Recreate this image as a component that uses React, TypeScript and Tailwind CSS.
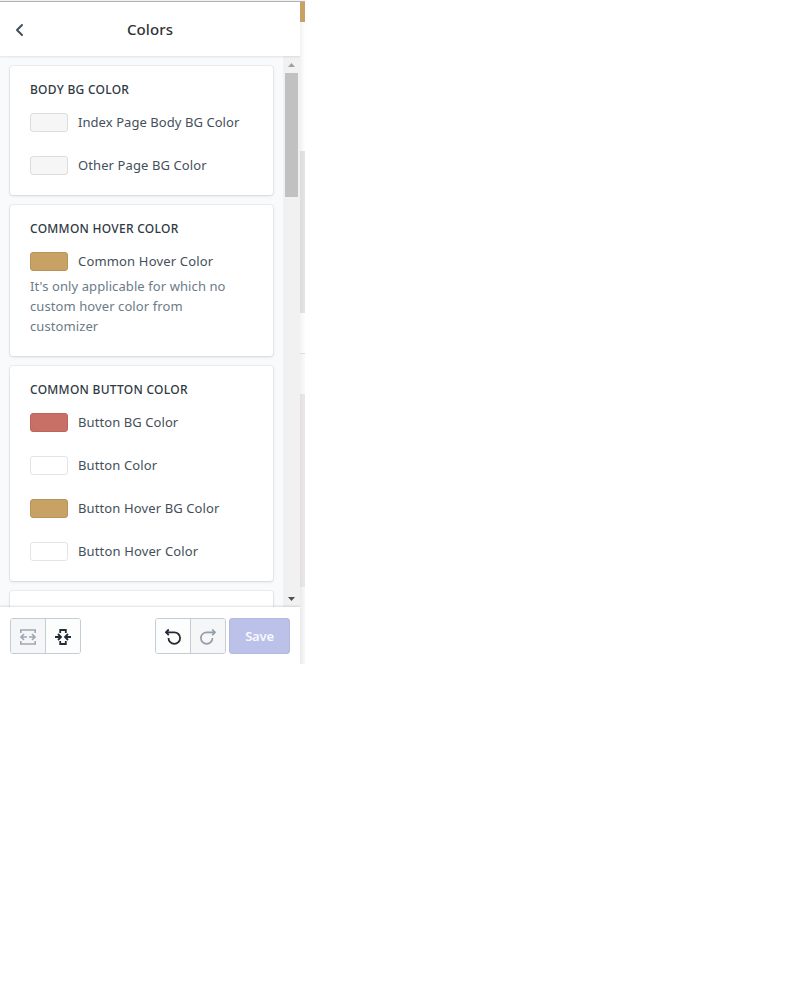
import React from "react";

type Item = { label: string; swatch: string; tracking: string };

function Row({ label, swatch, tracking }: Item) {
  return (
    <div className="flex h-5 items-center gap-[10px]">
      <span className={`mt-px h-[19px] w-[38px] shrink-0 rounded-[3px] border ${swatch}`} />
      <span className={`whitespace-nowrap text-[13px] leading-5 text-[#454f5b] ${tracking}`}>{label}</span>
    </div>
  );
}

function Card({ title, items, note, size }: { title: string; items: Item[]; note?: string[]; size: string }) {
  return (
    <section className={`shrink-0 rounded-[3px] bg-white px-5 pt-[14px] shadow-[0_0_0_1px_rgba(63,63,68,0.06),0_1px_3px_0_rgba(63,63,68,0.15)] ${size}`}>
      <h2 className="whitespace-nowrap text-[12px] font-medium leading-5 tracking-[0.27px] text-[#2f3943]">{title}</h2>
      <div className="mt-[12px] flex flex-col gap-[23px]">
        {items.map((item) => (
          <Row key={item.label} {...item} />
        ))}
      </div>
      {note && (
        <div className="mt-[5px] whitespace-nowrap text-[13px] leading-5 tracking-[0.09px] text-[#6c7b88]">
          {note.map((line) => (
            <p key={line}>{line}</p>
          ))}
        </div>
      )}
    </section>
  );
}

const gray = "border-[#dddddd] bg-[#f6f6f6]";
const tan = "border-[#b99358] bg-[#c8a165]";
const red = "border-[#bd655d] bg-[#c86f66]";
const white = "border-[#e3e4e6] bg-white";

export default function App() {
  return (
    <main className="flex h-[1000px] w-[800px] items-start bg-white font-['Noto_Sans',sans-serif]">
      <div className="flex h-[664px] w-[300px] flex-col overflow-hidden">
        <div className="h-px shrink-0 bg-[#f1f1f1]" />
        <div className="h-px shrink-0 bg-[#b3b3b3]" />
        <header className="z-10 grid h-[54px] shrink-0 grid-cols-[40px_1fr_40px] items-center bg-white shadow-[0_1px_2px_rgba(0,0,0,0.1)]">
          <svg className="ml-[14px] mt-[2px]" width="12" height="14" viewBox="0 0 12 14" fill="none" stroke="#454f5b" strokeWidth="2" strokeLinecap="round" strokeLinejoin="round">
            <path d="M8 2L3 7l5 5" />
          </svg>
          <h1 className="text-center text-[15px] font-medium tracking-[0.1px] text-[#2f3338]">Colors</h1>
        </header>
        <div className="flex h-[551px] shrink-0 overflow-hidden bg-[#f9fafb]">
          <div className="flex w-[283px] flex-col gap-[10px] overflow-hidden pl-[10px] pr-[10px] pt-[10px]">
            <Card
              title="BODY BG COLOR"
              size="h-[129px]"
              items={[
                { label: "Index Page Body BG Color", swatch: gray, tracking: "tracking-[0.06px]" },
                { label: "Other Page BG Color", swatch: gray, tracking: "tracking-[0.1px]" },
              ]}
            />
            <Card
              title="COMMON HOVER COLOR"
              size="h-[151px]"
              items={[{ label: "Common Hover Color", swatch: tan, tracking: "tracking-[0.17px]" }]}
              note={["It's only applicable for which no", "custom hover color from", "customizer"]}
            />
            <Card
              title="COMMON BUTTON COLOR"
              size="h-[215px]"
              items={[
                { label: "Button BG Color", swatch: red, tracking: "tracking-[0.08px]" },
                { label: "Button Color", swatch: white, tracking: "tracking-[0.12px]" },
                { label: "Button Hover BG Color", swatch: tan, tracking: "tracking-[0.12px]" },
                { label: "Button Hover Color", swatch: white, tracking: "tracking-[0.14px]" },
              ]}
            />
            <Card title="" size="h-[60px]" items={[]} />
          </div>
          <div className="flex w-[17px] flex-col items-center bg-[#f1f1f1]">
            <svg className="shrink-0" width="17" height="17" viewBox="0 0 17 17">
              <path d="M5 11l3.5-4 3.5 4z" fill="#a0a0a0" />
            </svg>
            <div className="h-[124px] w-[13px] shrink-0 bg-[#c1c1c1]" />
            <svg className="mt-auto shrink-0" width="17" height="17" viewBox="0 0 17 17">
              <path d="M5 7l3.5 4L12 7z" fill="#505050" />
            </svg>
          </div>
        </div>
        <footer className="z-10 flex h-[57px] shrink-0 items-start bg-white px-[10px] pt-[11px] shadow-[0_-1px_2px_rgba(0,0,0,0.13)]">
          <div className="flex h-9 w-[71px] overflow-hidden rounded-[3px] border border-[#c4cdd5]">
            <button className="flex w-[35px] items-center justify-center border-r border-[#c4cdd5] bg-[#f4f6f8]">
              <svg width="18" height="18" viewBox="0 0 18 18" fill="none" stroke="#9da8b3" strokeWidth="1.6">
                <path d="M1.8 6V3h14.4v3M1.8 14v3h14.4v-3M8 10H2M5 7l-3 3 3 3M10 10h6M13 7l3 3-3 3" />
              </svg>
            </button>
            <button className="flex w-[34px] items-center justify-center bg-[#fcfdfd]">
              <svg width="18" height="18" viewBox="0 0 18 18" fill="none" stroke="#212b36" strokeWidth="1.8">
                <path d="M6.2 6V3h5.6v3M6.2 14v3h5.6v-3M1 10h6M4 7l3 3-3 3M17 10h-6M14 7l-3 3 3 3" />
              </svg>
            </button>
          </div>
          <div className="ml-auto flex h-9 w-[71px] overflow-hidden rounded-[3px] border border-[#c4cdd5]">
            <button className="flex w-[35px] items-center justify-center border-r border-[#c4cdd5] bg-[#fcfdfd]">
              <svg width="18" height="18" viewBox="0 0 18 18" fill="none" stroke="#212b36" strokeWidth="1.8">
                <path d="M4.8 2.5L2 5.3l2.8 2.8M2.2 5.3h8.1a5.8 5.8 0 1 1-5.8 5.8" />
              </svg>
            </button>
            <button className="flex w-[34px] items-center justify-center bg-[#f4f6f8]">
              <svg width="18" height="18" viewBox="0 0 18 18" fill="none" stroke="#919eab" strokeWidth="1.7">
                <path d="M13.2 2.5L16 5.3l-2.8 2.8M15.8 5.3H7.7a5.8 5.8 0 1 0 5.8 5.8" />
              </svg>
            </button>
          </div>
          <button className="ml-[3px] h-9 w-[61px] rounded-[3px] border border-[#b3b9e0] bg-[#bbc1e8] pt-px text-[13px] font-semibold tracking-[-0.2px] text-[#f8f9fe]">Save</button>
        </footer>
      </div>
      <div className="flex h-[664px] w-[5px] flex-col bg-white">
        <div className="h-px bg-[#f1f1f1]" />
        <div className="h-px bg-[#b3b3b3]" />
        <div className="h-5 bg-[#c8a165]" />
        <div className="h-[129px] bg-linear-to-r from-[#f1f1f1] to-white" />
        <div className="h-[162px] bg-linear-to-r from-[#dddcda] to-[#e6e4e2]" />
        <div className="h-[40px] bg-linear-to-r from-[#f4f4f4] to-[#fdfdfd]" />
        <div className="h-px bg-[#dddddd]" />
        <div className="h-[40px] bg-linear-to-r from-[#f1f1f1] to-[#fafafa]" />
        <div className="h-[193px] bg-linear-to-r from-[#e2e0df] to-[#ebe8e6]" />
        <div className="flex-1 bg-linear-to-r from-[#ebebeb] to-[#f8f8f8]" />
      </div>
    </main>
  );
}
